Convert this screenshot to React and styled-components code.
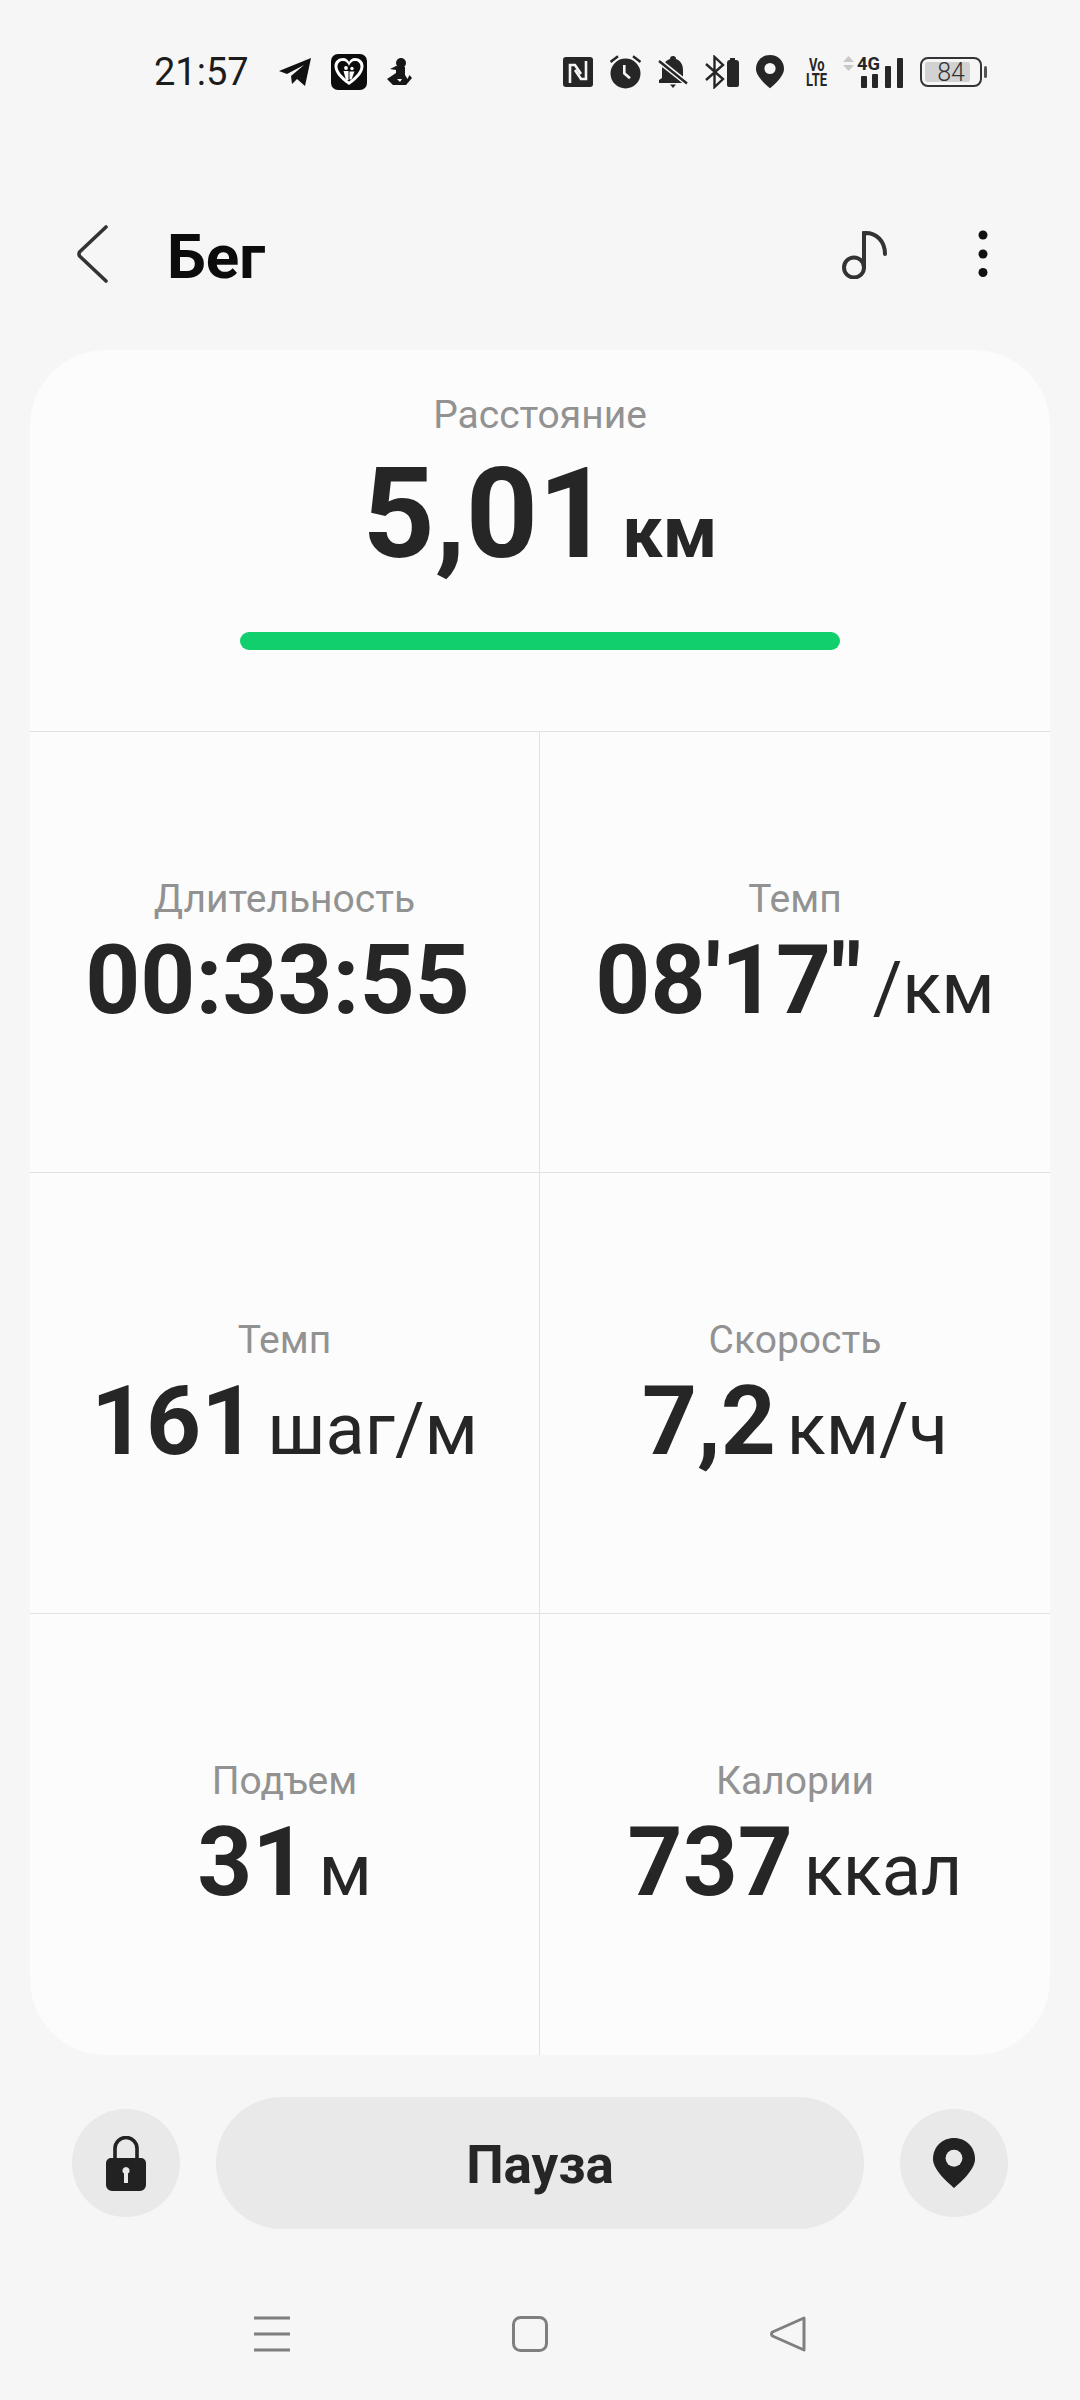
import React from "react";
import styled, { createGlobalStyle } from "styled-components";

const Global = createGlobalStyle`
  html, body {
    margin: 0;
    padding: 0;
    background: #f6f6f6;
  }
  * {
    box-sizing: border-box;
  }
`;

const Page = styled.div`
  width: 1080px;
  height: 2400px;
  background: #f6f6f6;
  font-family: Roboto, "Liberation Sans", sans-serif;
  color: #262626;
  display: flex;
  flex-direction: column;
`;

const StatusBar = styled.div`
  height: 72px;
  margin-top: 36px;
  padding: 0 98px 0 154px;
  display: flex;
  align-items: center;
  justify-content: space-between;
`;

const StatusGroup = styled.div`
  display: flex;
  align-items: center;
  gap: ${(p) => p.$gap || 16}px;
`;

const Clock = styled.span`
  font-size: 38px;
  color: #1c1c1c;
  margin-right: 10px;
`;

const Header = styled.header`
  height: 130px;
  margin-top: 81px;
  padding: 0 91px 0 76px;
  display: flex;
  align-items: center;
`;

const Title = styled.h1`
  margin: 0 0 0 59px;
  padding-top: 4px;
  flex: 1;
  font-size: 62px;
  font-weight: 700;
  color: #0c0c0c;
`;

const HeaderActions = styled.div`
  display: flex;
  align-items: center;
  gap: 89px;
`;

const Card = styled.section`
  margin: 31px 30px 0;
  height: 1705px;
  background: #fcfcfc;
  border-radius: 76px;
  overflow: hidden;
  display: flex;
  flex-direction: column;
`;

const Summary = styled.div`
  height: 382px;
  padding-top: 44px;
  border-bottom: 1px solid #e2e2e2;
  display: flex;
  flex-direction: column;
  align-items: center;
`;

const Label = styled.div`
  font-size: 39px;
  line-height: 42px;
  color: #929292;
`;

const BigValue = styled.div`
  margin-top: 14px;
  font-size: 126px;
  line-height: 128px;
  font-weight: 700;
  white-space: nowrap;
`;

const BigUnit = styled.span`
  font-size: 72px;
  line-height: 0;
  margin-left: 12px;
`;

const Progress = styled.div`
  width: 600px;
  height: 18px;
  margin-top: 54px;
  border-radius: 9px;
  background: #11cf6d;
`;

const Grid = styled.div`
  flex: 1;
  display: grid;
  grid-template-columns: 1fr 1fr;
  grid-auto-rows: 1fr;
`;

const Cell = styled.div`
  display: flex;
  flex-direction: column;
  align-items: center;
  padding-top: 146px;
  border-bottom: ${(p) => (p.$last ? "none" : "1px solid #e2e2e2")};
  border-right: ${(p) => (p.$left ? "1px solid #e2e2e2" : "none")};
`;

const Value = styled.div`
  margin-top: 8px;
  padding-right: ${(p) => (p.$bare ? 14 : 0)}px;
  font-size: 96px;
  line-height: 104px;
  font-weight: 700;
  white-space: nowrap;
`;

const Unit = styled.span`
  font-size: 72px;
  line-height: 0;
  font-weight: 400;
  margin-left: 11px;
`;

const Controls = styled.div`
  margin-top: 42px;
  padding: 0 72px;
  display: flex;
  align-items: center;
  justify-content: space-between;
`;

const RoundButton = styled.button`
  width: 108px;
  height: 108px;
  border: none;
  border-radius: 50%;
  background: #e9e9e9;
  padding: 0;
  display: flex;
  align-items: center;
  justify-content: center;
`;

const PauseButton = styled.button`
  width: 648px;
  height: 132px;
  border: none;
  border-radius: 66px;
  background: #e9e9e9;
  color: #262626;
  padding: 4px 0 0;
  font-family: inherit;
  font-size: 53px;
  font-weight: 700;
`;

const NavBar = styled.nav`
  margin-top: 87px;
  padding: 0 274px 0 254px;
  display: flex;
  align-items: center;
  justify-content: space-between;
`;

const PlaneIcon = () => (
  <svg width="32" height="28" viewBox="0 0 32 28">
    <path d="M0 13 L32 0 L26 28 L18 21 L13 26 L12 18 L25 7 L8 16 Z" fill="#111" />
  </svg>
);

const FamilyIcon = () => (
  <svg width="36" height="36" viewBox="0 0 36 36">
    <rect width="36" height="36" rx="7" fill="#0c0c0c" />
    <path d="M18 31 C8 24 3.5 18 3.5 12 C3.5 7 7.5 4 12 4 C15 4 17 6 18 8 C19 6 21 4 24 4 C28.5 4 32.5 7 32.5 12 C32.5 18 28 24 18 31 Z" fill="#fff" />
    <path d="M18 27.5 C11 22 6.5 17 6.5 12.5 C6.5 9 9 7 12 7 C15 7 17 9 18 12 C19 9 21 7 24 7 C27 7 29.5 9 29.5 12.5 C29.5 17 25 22 18 27.5 Z" fill="#0c0c0c" />
    <circle cx="15" cy="14" r="1.9" fill="#fff" />
    <circle cx="21" cy="14.5" r="1.7" fill="#fff" />
    <path d="M12.5 17h5v9h-2.5zM18.5 17.5h5l-3 8h-2z" fill="#fff" />
  </svg>
);

const YogaIcon = () => (
  <svg width="26" height="28" viewBox="0 0 26 28">
    <circle cx="14" cy="5" r="5" fill="#161616" />
    <path d="M9 8 L3 11 L9 12 L9 15 L0 21 L6 27 H19 L25 20 L22.5 17 L20.5 21 L18 17 L18 9 Z" fill="#161616" />
    <path d="M10 21 L15 21 L13 24 Z" fill="#f6f6f6" />
  </svg>
);

const NfcIcon = () => (
  <svg width="30" height="30" viewBox="0 0 30 30">
    <rect width="30" height="30" rx="3" fill="#262626" />
    <path d="M7 26 V8 H12 L18 17 M23 4 V22 H18 L12 13" fill="none" stroke="#f6f6f6" strokeWidth="2.6" />
  </svg>
);

const AlarmIcon = () => (
  <svg width="31" height="34" viewBox="0 0 31 34">
    <circle cx="15.5" cy="18.5" r="15" fill="#262626" />
    <path d="M14.3 10 V18.3 L20 23.3" fill="none" stroke="#f6f6f6" strokeWidth="2.6" />
    <path d="M0.5 7 L8 1.2 M30.5 7 L23 1.2" stroke="#262626" strokeWidth="2.4" />
  </svg>
);

const BellOffIcon = () => (
  <svg width="30" height="33" viewBox="0 0 30 33">
    <path d="M15 0 c2 0 3 1 3 3 c5 2 7 6 7 11 v8 l4 4 v1 H1 v-3 l3 -2 v-8 c0 -5 3 -9 8 -11 c0 -2 1 -3 3 -3 Z" fill="#262626" />
    <path d="M12 28.5 h6 l-3 3.5 Z" fill="#262626" />
    <path d="M1 5 L30 28" stroke="#f6f6f6" strokeWidth="5.5" />
    <path d="M1 5 L29 27.5" stroke="#262626" strokeWidth="2.4" />
  </svg>
);

const BluetoothIcon = () => (
  <svg width="34" height="34" viewBox="0 0 34 34">
    <path d="M1 9 L18 24 L9.5 32 V2 L18 10 L1 25" fill="none" stroke="#262626" strokeWidth="2.4" />
    <path d="M24 5 h1 v-2 h5 v2 h1 a3 3 0 0 1 3 3 v22 a2 2 0 0 1 -2 2 h-8 a2 2 0 0 1 -2 -2 V8 a3 3 0 0 1 2 -3 Z" fill="#262626" />
  </svg>
);

const PinIcon = ({ size = 28, hole = "#f6f6f6", color = "#262626" }) => (
  <svg width={size} height={size * 1.19} viewBox="0 0 28 33.3">
    <path d="M14 0 C22 0 28 6 28 14 C28 21 19 29 14 33.3 C9 29 0 21 0 14 C0 6 6 0 14 0 Z" fill={color} />
    <circle cx="14" cy="13.5" r="5.6" fill={hole} />
  </svg>
);

const SignalIcon = () => (
  <svg width="60" height="38" viewBox="0 -3 60 38">
    <path d="M5.5 0 L11 6 H0 Z M5.5 15 L11 9 H0 Z" fill="#c8c8c8" />
    <text x="14" y="14" fontFamily="Roboto, sans-serif" fontSize="18" fontWeight="700" fill="#262626" textLength="23" lengthAdjust="spacingAndGlyphs">4G</text>
    <rect x="18" y="20" width="6" height="12" rx="1" fill="#262626" />
    <rect x="29" y="18" width="6" height="14" rx="1" fill="#262626" />
    <rect x="42" y="10" width="6" height="22" rx="1" fill="#262626" />
    <rect x="54" y="2" width="6" height="30" rx="1" fill="#262626" />
  </svg>
);

const VolteBox = styled.div`
  width: 22px;
  margin: 0 -2px 0 5px;
  display: flex;
  flex-direction: column;
  align-items: center;
  font-size: 18px;
  line-height: 15px;
  font-weight: 700;
  color: #262626;
`;

const VolteLine = styled.span`
  transform: scaleX(0.72);
`;

const BatteryBox = styled.div`
  position: relative;
  width: 62px;
  height: 30px;
  border: 2px solid #333;
  border-radius: 8px;
  display: flex;
  align-items: center;
  justify-content: center;
  font-size: 25px;
  font-weight: 300;
  color: #333;
  &::before {
    content: "";
    position: absolute;
    left: 3px;
    top: 3px;
    bottom: 3px;
    width: 45px;
    background: #d2d2d2;
    border-radius: 2px;
  }
  &::after {
    content: "";
    position: absolute;
    right: -7px;
    top: 7px;
    width: 3px;
    height: 12px;
    background: #555;
    border-radius: 2px;
  }
`;

const BatteryText = styled.span`
  position: relative;
`;

const BackIcon = () => (
  <svg width="32" height="58" viewBox="0 0 32 58">
    <path d="M30 2 L3.5 27 Q2.5 29 3.5 31 L30 56" fill="none" stroke="#333" strokeWidth="3.6" strokeLinecap="round" strokeLinejoin="round" />
  </svg>
);

const NoteIcon = () => (
  <svg width="48" height="50" viewBox="0 0 48 50">
    <circle cx="14" cy="38.5" r="10" fill="none" stroke="#333" strokeWidth="4" />
    <path d="M24 38 V4 C36 3 45 12 45 25" fill="none" stroke="#333" strokeWidth="4" strokeLinecap="round" />
  </svg>
);

const DotsIcon = () => (
  <svg width="12" height="50" viewBox="0 0 12 50">
    <circle cx="6" cy="6" r="4.5" fill="#111" />
    <circle cx="6" cy="25" r="4.5" fill="#111" />
    <circle cx="6" cy="43.5" r="4.5" fill="#111" />
  </svg>
);

const LockIcon = () => (
  <svg width="40" height="55" viewBox="0 0 40 55">
    <path d="M9 24 V12.5 a11 11 0 0 1 22 0 V24" fill="none" stroke="#222" strokeWidth="3.6" />
    <path fillRule="evenodd" d="M5 22 H35 a5 5 0 0 1 5 5 V49 a6 6 0 0 1 -6 6 H6 a6 6 0 0 1 -6 -6 V27 a5 5 0 0 1 5 -5 Z M20 31 a3.6 3.6 0 0 0 -2 6.6 V47 h4 V37.6 A3.6 3.6 0 0 0 20 31 Z" fill="#222" />
  </svg>
);

const MenuIcon = () => (
  <svg width="36" height="36" viewBox="0 0 36 36">
    <path d="M0 2 H36 M0 18 H36 M0 34 H36" stroke="#7f7f7f" strokeWidth="3.2" />
  </svg>
);

const HomeIcon = () => (
  <svg width="36" height="36" viewBox="0 0 36 36">
    <rect x="1.5" y="1.5" width="33" height="33" rx="7" fill="none" stroke="#7f7f7f" strokeWidth="3" />
  </svg>
);

const BackNavIcon = () => (
  <svg width="36" height="36" viewBox="0 0 36 36">
    <path d="M34 2 V34 L2.5 20 a2.6 2.6 0 0 1 0 -4 Z" fill="none" stroke="#7f7f7f" strokeWidth="3" strokeLinejoin="round" />
  </svg>
);

const stats = [
  { label: "Длительность", value: "00:33:55" },
  { label: "Темп", value: "08'17\"", unit: "/км" },
  { label: "Темп", value: "161", unit: "шаг/м" },
  { label: "Скорость", value: "7,2", unit: "км/ч" },
  { label: "Подъем", value: "31", unit: "м" },
  { label: "Калории", value: "737", unit: "ккал" },
];

const App = () => {
  return (
    <Page>
      <Global />
      <StatusBar>
        <StatusGroup $gap={20}>
          <Clock>21:57</Clock>
          <PlaneIcon />
          <FamilyIcon />
          <YogaIcon />
        </StatusGroup>
        <StatusGroup $gap={17}>
          <NfcIcon />
          <AlarmIcon />
          <BellOffIcon />
          <BluetoothIcon />
          <PinIcon />
          <VolteBox>
            <VolteLine>Vo</VolteLine>
            <VolteLine>LTE</VolteLine>
          </VolteBox>
          <SignalIcon />
          <BatteryBox>
            <BatteryText>84</BatteryText>
          </BatteryBox>
        </StatusGroup>
      </StatusBar>
      <Header>
        <BackIcon />
        <Title>Бег</Title>
        <HeaderActions>
          <NoteIcon />
          <DotsIcon />
        </HeaderActions>
      </Header>
      <Card>
        <Summary>
          <Label>Расстояние</Label>
          <BigValue>
            5,01<BigUnit>км</BigUnit>
          </BigValue>
          <Progress />
        </Summary>
        <Grid>
          {stats.map((s, i) => (
            <Cell key={i} $left={i % 2 === 0} $last={i >= 4}>
              <Label>{s.label}</Label>
              <Value $bare={!s.unit}>
                {s.value}
                {s.unit && <Unit>{s.unit}</Unit>}
              </Value>
            </Cell>
          ))}
        </Grid>
      </Card>
      <Controls>
        <RoundButton>
          <LockIcon />
        </RoundButton>
        <PauseButton>Пауза</PauseButton>
        <RoundButton>
          <PinIcon size={42} hole="#e9e9e9" color="#222" />
        </RoundButton>
      </Controls>
      <NavBar>
        <MenuIcon />
        <HomeIcon />
        <BackNavIcon />
      </NavBar>
    </Page>
  );
};

export default App;
